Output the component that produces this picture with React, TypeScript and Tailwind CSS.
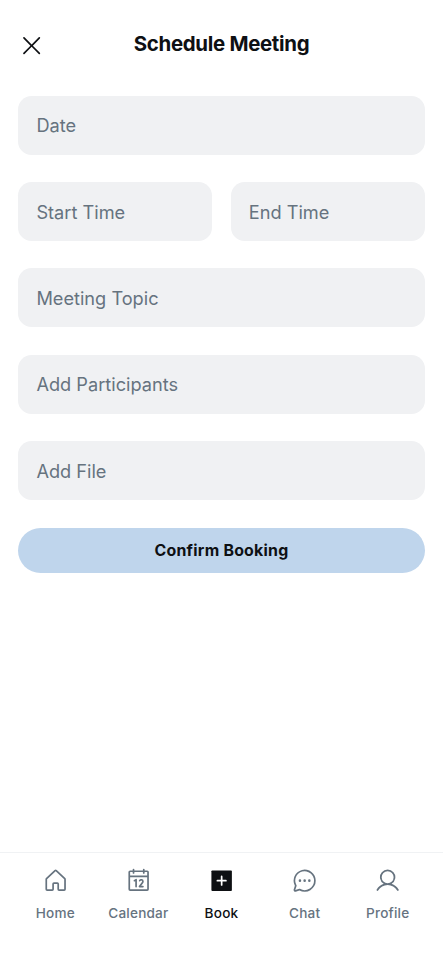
import { PiCalendar, PiChatCircleDots, PiUser, PiX } from 'react-icons/pi';

function HouseIcon({ className }: { className?: string }) {
  return (
    <svg viewBox="0 0 256 256" fill="currentColor" className={className}>
      <path d="M218.83,103.77l-80-75.48a1.14,1.14,0,0,1-.11-.11,16,16,0,0,0-21.53,0l-.11.11L37.17,103.77A16,16,0,0,0,32,115.55V208a16,16,0,0,0,16,16H96a16,16,0,0,0,16-16V160h32v48a16,16,0,0,0,16,16h48a16,16,0,0,0,16-16V115.55A16,16,0,0,0,218.83,103.77ZM208,208H160V160a16,16,0,0,0-16-16H112a16,16,0,0,0-16,16v48H48V115.55l.11-.1L128,40l79.9,75.43.11.1Z" />
    </svg>
  );
}

function PlusSquareIcon({ className }: { className?: string }) {
  return (
    <svg viewBox="0 0 256 256" className={className}>
      <rect x="32" y="32" width="192" height="192" rx="8" fill="currentColor" />
      <path d="M88 128h80M128 88v80" stroke="white" strokeWidth="16" strokeLinecap="round" />
    </svg>
  );
}

function Field({ label }: { label: string }) {
  return (
    <input
      type="text"
      placeholder={label}
      aria-label={label}
      className="block h-[59px] w-full min-w-0 flex-1 rounded-[13.6px] bg-[#f0f1f3] px-[18.2px] text-[18.2px] text-[#111418] outline-none placeholder:text-[#66737f]"
    />
  );
}

export default function App() {
  const navItems = [
    { name: 'Home', icon: HouseIcon },
    { name: 'Calendar', icon: PiCalendar },
    { name: 'Book', icon: PlusSquareIcon, active: true },
    { name: 'Chat', icon: PiChatCircleDots },
    { name: 'Profile', icon: PiUser },
  ];

  return (
    <div className="flex h-screen flex-col justify-between bg-white font-['Inter',sans-serif] text-[#0e1013]">
      <div>
        <header className="flex items-center px-[18.2px] pt-[18px]">
          <button aria-label="Close" className="flex h-[54.5px] w-[54.5px] items-center">
            <PiX className="size-[27.3px]" />
          </button>
          <h1 className="flex-1 pr-[54.5px] pb-[3px] text-center text-[20.45px] leading-[25px] font-bold tracking-[-0.015em]">
            Schedule Meeting
          </h1>
        </header>

        <form className="flex flex-col gap-[27.4px] px-[18.2px] pt-[23.2px]">
          <div className="flex">
            <Field label="Date" />
          </div>
          <div className="flex gap-[18.2px]">
            <Field label="Start Time" />
            <Field label="End Time" />
          </div>
          <div className="flex">
            <Field label="Meeting Topic" />
          </div>
          <div className="flex">
            <Field label="Add Participants" />
          </div>
          <div className="flex">
            <Field label="Add File" />
          </div>
          <button
            type="button"
            className="h-[45.4px] rounded-full bg-[#bfd5ec] pt-[2px] text-[15.9px] font-bold tracking-[0.015em]"
          >
            Confirm Booking
          </button>
        </form>
      </div>

      <nav className="flex h-[108px] gap-[9px] border-t border-[#f0f2f4] px-[18.2px] pt-[9px]">
        {navItems.map(({ name, icon: Icon, active }) => (
          <a
            key={name}
            href="#"
            className={`flex flex-1 flex-col items-center gap-[4.5px] ${active ? 'text-[#0e1013]' : 'text-[#66737f]'}`}
          >
            <span className="flex h-[36.4px] items-center">
              <Icon className="size-[27.3px]" />
            </span>
            <span className="text-[13.6px] leading-[20.5px] font-medium tracking-[0.015em]">{name}</span>
          </a>
        ))}
      </nav>
    </div>
  );
}
